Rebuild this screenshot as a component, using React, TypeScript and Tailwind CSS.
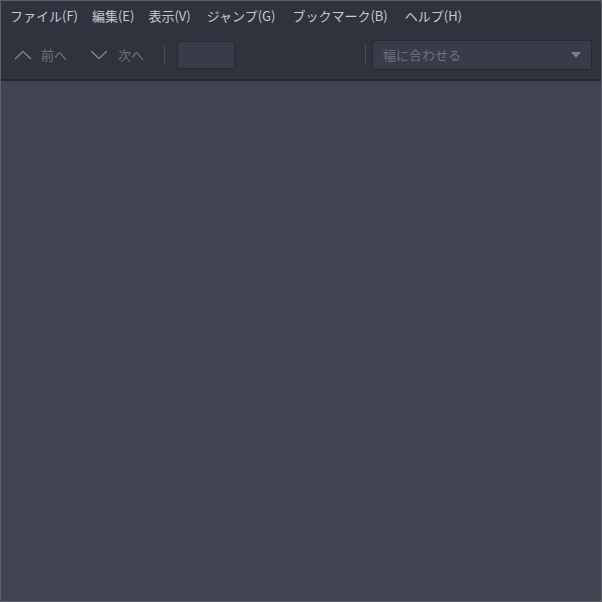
import React from "react";

const menus = [
  { label: "ファイル(F)", gap: "mr-[14px]" },
  { label: "編集(E)", gap: "mr-[14px]" },
  { label: "表示(V)", gap: "mr-[16px]" },
  { label: "ジャンプ(G)", gap: "mr-[17px]" },
  { label: "ブックマーク(B)", gap: "mr-[17px]" },
  { label: "ヘルプ(H)", gap: "mr-0" },
];

const font = { fontFamily: '"Noto Sans CJK JP", "Noto Sans", sans-serif' };

const Chevron = ({ up }: { up?: boolean }) => (
  <svg width="18" height="10" viewBox="0 0 18 10" fill="none" stroke="#80868f" strokeWidth="1.3">
    {up ? <path d="M1 9 L9 1.5 L17 9" /> : <path d="M1 1 L9 8.5 L17 1" />}
  </svg>
);

export default function App() {
  return (
    <div
      className="w-[602px] h-[602px] border border-[#5b5f67] bg-[#3f4450] flex flex-col overflow-hidden text-[13px]"
      style={font}
    >
      {/* Menu bar */}
      <div className="h-[29px] bg-[#2f333d] flex items-center pl-[9px] text-[#c5c9d1]">
        {menus.map((m) => (
          <span key={m.label} className={`${m.gap} leading-none`}>
            {m.label}
          </span>
        ))}
      </div>

      {/* Toolbar */}
      <div className="h-[51px] bg-[#2f333d] border-b-2 border-[#24272e] flex items-center pl-[13px] pr-[9px] text-[#6c727d]">
        <div className="flex items-center gap-[9px]">
          <Chevron up />
          <span>前へ</span>
        </div>
        <div className="flex items-center gap-[10px] ml-[23px]">
          <Chevron />
          <span>次へ</span>
        </div>
        <div className="w-px h-[21px] bg-[#464b55] ml-[20px]" />
        <div className="w-[58px] h-[28px] ml-[12px] rounded-[3px] bg-[#373c48] border border-[#272a31]" />
        <div className="flex-1" />
        <div className="w-px h-[21px] bg-[#464b55] mr-[6px]" />
        <div className="w-[220px] h-[30px] rounded-[3px] bg-[#373c48] border border-[#272a31] flex items-center pl-[10px] pr-[10px]">
          <span className="flex-1">幅に合わせる</span>
          <svg width="10" height="6" viewBox="0 0 10 6">
            <path d="M0 0 L10 0 L5 6 Z" fill="#7a808a" />
          </svg>
        </div>
      </div>

      {/* Content */}
      <div className="flex-1 bg-[#3f4450]" />
    </div>
  );
}
